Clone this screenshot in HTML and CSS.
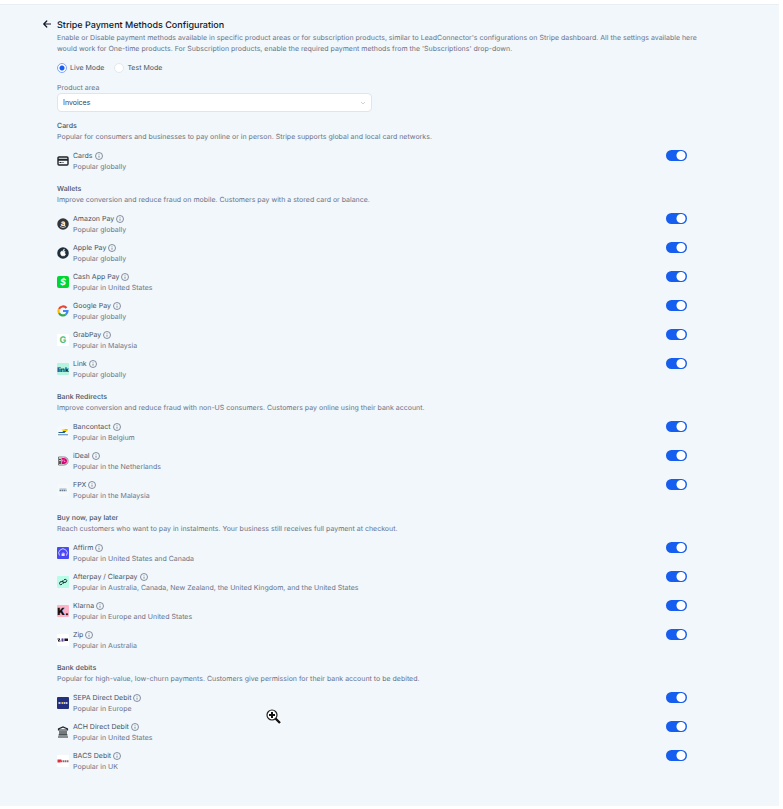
FILE: index.html
```html
<!DOCTYPE html>
<html lang="en">
<head>
    <meta charset="UTF-8">
    <meta name="viewport" content="width=device-width, initial-scale=1.0">
    <title>Stripe Payment Methods Configuration</title>
    <link rel="stylesheet" href="styles.css">
</head>
<body>
    <svg class="sprite" aria-hidden="true">
        <symbol id="info" viewBox="0 0 16 16">
            <circle cx="8" cy="8" r="7" fill="none" stroke="currentColor" stroke-width="1.6"/>
            <path d="M8 7.4v4M8 4.400v1.200" fill="none" stroke="currentColor" stroke-width="1.6"/>
        </symbol>
    </svg>

    <main class="panel">
        <button class="back-button" aria-label="Back">
            <svg viewBox="0 0 16 16"><path d="M15 8H1.5M7.5 2L1.5 8l6 6" fill="none" stroke="currentColor" stroke-width="2.4" stroke-linecap="round" stroke-linejoin="round"/></svg>
        </button>
        <div class="content">
            <h1 class="title">Stripe Payment Methods Configuration</h1>
            <p class="intro">Enable or Disable payment methods available in specific product areas or for subscription products, similar to LeadConnector's configurations on Stripe dashboard. All the settings available here would work for One-time products. For Subscription products, enable the required payment methods from the 'Subscriptions' drop-down.</p>

            <div class="modes">
                <label class="mode"><input type="radio" name="mode" class="radio" checked>Live Mode</label>
                <label class="mode"><input type="radio" name="mode" class="radio">Test Mode</label>
            </div>

            <label class="field-label" for="area">Product area</label>
            <div class="select-box">
                <select id="area" class="select">
                    <option>Invoices</option>
                </select>
                <svg class="chevron" viewBox="0 0 12 12"><path d="M2 4l4 4 4-4" fill="none" stroke="currentColor" stroke-width="1.4"/></svg>
            </div>

            <section class="group">
                <h2 class="group-title">Cards</h2>
                <p class="group-text">Popular for consumers and businesses to pay online or in person. Stripe supports global and local card networks.</p>
                <ul class="methods">
                    <li class="method">
                        <svg class="logo" viewBox="0 0 24 24"><rect x="2" y="4" width="20" height="16" rx="2" fill="none" stroke="#202327" stroke-width="2.8"/><path d="M2 9.5h20" stroke="#202327" stroke-width="4"/><path d="M5 15h4M11 15h2" stroke="#202327" stroke-width="2"/></svg>
                        <div class="details">
                            <label class="name" for="cards">Cards</label><svg class="info"><use href="#info"/></svg>
                            <p class="region">Popular globally</p>
                        </div>
                        <input type="checkbox" id="cards" class="toggle" checked>
                    </li>
                </ul>
            </section>

            <section class="group">
                <h2 class="group-title">Wallets</h2>
                <p class="group-text">Improve conversion and reduce fraud on mobile. Customers pay with a stored card or balance.</p>
                <ul class="methods">
                    <li class="method">
                        <svg class="logo" viewBox="0 0 24 24"><circle cx="12" cy="12" r="11.5" fill="#333536"/><text x="12" y="15" font-size="16" font-weight="700" text-anchor="middle" fill="#fff">a</text><path d="M6 17q6 4 12 0" fill="none" stroke="#fff" stroke-width="1.4"/></svg>
                        <div class="details">
                            <label class="name" for="amazon">Amazon Pay</label><svg class="info"><use href="#info"/></svg>
                            <p class="region">Popular globally</p>
                        </div>
                        <input type="checkbox" id="amazon" class="toggle" checked>
                    </li>
                    <li class="method">
                        <svg class="logo" viewBox="0 0 24 24"><circle cx="12" cy="12" r="11.5" fill="#1f2f3c"/><path d="M16.5 9.3c-1.7-1.6-3.3-.5-4.3-.5s-2.500-1-4.100.4c-1.800 1.600-1.300 5.200.7 7.700 1.300 1.500 2 .6 3.400.6s2.200.9 3.400-.6c.7-.8 1.200-1.700 1.500-2.600-2-1-2.200-3.600-.6-5zM12 8c0-2 1-3.200 2.800-3.600.1 2-1 3.400-2.800 3.600z" fill="#fff" stroke="#fff"/></svg>
                        <div class="details">
                            <label class="name" for="apple">Apple Pay</label><svg class="info"><use href="#info"/></svg>
                            <p class="region">Popular globally</p>
                        </div>
                        <input type="checkbox" id="apple" class="toggle" checked>
                    </li>
                    <li class="method">
                        <svg class="logo" viewBox="0 0 24 24"><rect width="24" height="24" rx="4" fill="#00d632"/><text x="12" y="18.500" font-size="18" font-weight="700" font-style="italic" text-anchor="middle" fill="#fff">$</text></svg>
                        <div class="details">
                            <label class="name" for="cashapp">Cash App Pay</label><svg class="info"><use href="#info"/></svg>
                            <p class="region">Popular in United States</p>
                        </div>
                        <input type="checkbox" id="cashapp" class="toggle" checked>
                    </li>
                    <li class="method">
                        <svg class="logo" viewBox="0 0 24 24" fill="none" stroke-width="4.400"><path d="M19 6.100A9 9 0 0 0 4 8" stroke="#ea4335"/><path d="M4 8a9 9 0 0 0 0 8" stroke="#fbbc05"/><path d="M4 16a9 9 0 0 0 13.500 3" stroke="#34a853"/><path d="M17.500 19a9 9 0 0 0 3.500-7H12" stroke="#4285f4"/></svg>
                        <div class="details">
                            <label class="name" for="google">Google Pay</label><svg class="info"><use href="#info"/></svg>
                            <p class="region">Popular globally</p>
                        </div>
                        <input type="checkbox" id="google" class="toggle" checked>
                    </li>
                    <li class="method">
                        <svg class="logo" viewBox="0 0 24 24"><rect width="24" height="24" rx="2" fill="#fff"/><text x="12" y="18" font-size="18" font-weight="700" text-anchor="middle" fill="#4fbd78">G</text></svg>
                        <div class="details">
                            <label class="name" for="grabpay">GrabPay</label><svg class="info"><use href="#info"/></svg>
                            <p class="region">Popular in Malaysia</p>
                        </div>
                        <input type="checkbox" id="grabpay" class="toggle" checked>
                    </li>
                    <li class="method">
                        <svg class="logo" viewBox="0 0 24 24"><rect width="24" height="24" rx="2" fill="#b5f5df"/><text x="12" y="18" font-size="13" font-weight="800" text-anchor="middle" fill="#10372f">link</text></svg>
                        <div class="details">
                            <label class="name" for="link">Link</label><svg class="info"><use href="#info"/></svg>
                            <p class="region">Popular globally</p>
                        </div>
                        <input type="checkbox" id="link" class="toggle" checked>
                    </li>
                </ul>
            </section>

            <section class="group">
                <h2 class="group-title">Bank Redirects</h2>
                <p class="group-text">Improve conversion and reduce fraud with non-US consumers. Customers pay online using their bank account.</p>
                <ul class="methods">
                    <li class="method">
                        <svg class="logo" viewBox="0 0 24 24"><rect width="24" height="24" rx="2" fill="#f6f9fa"/><path d="M3 13h6l6-6h7l-3 4h-5l-3 3H3z" fill="#ffd000"/><path d="M3 12h8l5-5h5l-6 7H3z" fill="#155da8"/><path d="M9 7h13l-2 3h-8z" fill="#ffd000"/><path d="M2 17.500h20" stroke="#5a83ac" stroke-width="2"/></svg>
                        <div class="details">
                            <label class="name" for="bancontact">Bancontact</label><svg class="info"><use href="#info"/></svg>
                            <p class="region">Popular in Belgium</p>
                        </div>
                        <input type="checkbox" id="bancontact" class="toggle" checked>
                    </li>
                    <li class="method">
                        <svg class="logo" viewBox="0 0 24 24"><path d="M3 4h10c6 0 9 3 9 8s-3 8-9 8H3z" fill="#fff" stroke="#555" stroke-width="1.500"/><path d="M9 6h4c5 0 7 2 7 6s-2 6-7 6H9z" fill="#d50172"/><circle cx="6" cy="9" r="1.800" fill="#222"/><path d="M4.500 12h3v6h-3z" fill="#222"/><path d="M11 9v4M14 9v4h3" stroke="#fff" fill="none"/></svg>
                        <div class="details">
                            <label class="name" for="ideal">iDeal</label><svg class="info"><use href="#info"/></svg>
                            <p class="region">Popular in the Netherlands</p>
                        </div>
                        <input type="checkbox" id="ideal" class="toggle" checked>
                    </li>
                    <li class="method">
                        <svg class="logo" viewBox="0 0 24 24"><rect width="24" height="24" rx="2" fill="#f6f9fa"/><path d="M5 10h14" stroke="#9ab2ce" stroke-width="2"/><path d="M5 13h14" stroke="#68788b" stroke-width="3" stroke-dasharray="3 1"/></svg>
                        <div class="details">
                            <label class="name" for="fpx">FPX</label><svg class="info"><use href="#info"/></svg>
                            <p class="region">Popular in the Malaysia</p>
                        </div>
                        <input type="checkbox" id="fpx" class="toggle" checked>
                    </li>
                </ul>
            </section>

            <section class="group">
                <h2 class="group-title">Buy now, pay later</h2>
                <p class="group-text">Reach customers who want to pay in instalments. Your business still receives full payment at checkout.</p>
                <ul class="methods">
                    <li class="method">
                        <svg class="logo" viewBox="0 0 24 24"><rect width="24" height="24" rx="2" fill="#4a4af4"/><path d="M5 17a8.500 8.500 0 1 1 14 0" fill="none" stroke="#d8d8ff" stroke-width="1.800"/><text x="12" y="18" font-size="12" font-weight="700" text-anchor="middle" fill="#fff">a</text></svg>
                        <div class="details">
                            <label class="name" for="affirm">Affirm</label><svg class="info"><use href="#info"/></svg>
                            <p class="region">Popular in United States and Canada</p>
                        </div>
                        <input type="checkbox" id="affirm" class="toggle" checked>
                    </li>
                    <li class="method">
                        <svg class="logo" viewBox="0 0 24 24"><rect width="24" height="24" rx="2" fill="#b8fbe7"/><path d="M10 16.500l-3.500 1L5 15l1.500-3.500 5.500-.5 1 3-2 2M14 7.500l3.500-1L19.500 9 18 12.500l-5.500.5-1.500-3 2-2" fill="none" stroke="#14332d" stroke-width="2"/></svg>
                        <div class="details">
                            <label class="name" for="afterpay">Afterpay / Clearpay</label><svg class="info"><use href="#info"/></svg>
                            <p class="region">Popular in Australia, Canada, New Zealand, the United Kingdom, and the United States</p>
                        </div>
                        <input type="checkbox" id="afterpay" class="toggle" checked>
                    </li>
                    <li class="method">
                        <svg class="logo" viewBox="0 0 24 24"><rect width="24" height="24" rx="2" fill="#ffb3c7"/><text x="12" y="19" font-size="20" font-weight="900" text-anchor="middle" fill="#111">K.</text></svg>
                        <div class="details">
                            <label class="name" for="klarna">Klarna</label><svg class="info"><use href="#info"/></svg>
                            <p class="region">Popular in Europe and United States</p>
                        </div>
                        <input type="checkbox" id="klarna" class="toggle" checked>
                    </li>
                    <li class="method">
                        <svg class="logo" viewBox="0 0 24 24"><rect width="24" height="24" rx="2" fill="#fff"/><path d="M1 10h5l-4 4h5" fill="none" stroke="#1c1526" stroke-width="2"/><rect x="8" y="9" width="7" height="6" fill="#aa8fff"/><path d="M11 9v6" stroke="#402a70" stroke-width="1.500"/><path d="M15 9h7v5h-7z" fill="#1c1526"/></svg>
                        <div class="details">
                            <label class="name" for="zip">Zip</label><svg class="info"><use href="#info"/></svg>
                            <p class="region">Popular in Australia</p>
                        </div>
                        <input type="checkbox" id="zip" class="toggle" checked>
                    </li>
                </ul>
            </section>

            <section class="group">
                <h2 class="group-title">Bank debits</h2>
                <p class="group-text">Popular for high-value, low-churn payments. Customers give permission for their bank account to be debited.</p>
                <ul class="methods">
                    <li class="method">
                        <svg class="logo" viewBox="0 0 24 24"><rect width="24" height="24" rx="2" fill="#24307d"/><path d="M3 12h5M14 12h7" stroke="#c3cae6" stroke-width="4" stroke-dasharray="3 1"/><path d="M9 12h4" stroke="#d8bd52" stroke-width="4"/></svg>
                        <div class="details">
                            <label class="name" for="sepa">SEPA Direct Debit</label><svg class="info"><use href="#info"/></svg>
                            <p class="region">Popular in Europe</p>
                        </div>
                        <input type="checkbox" id="sepa" class="toggle" checked>
                    </li>
                    <li class="method">
                        <svg class="logo" viewBox="0 0 24 24" fill="none" stroke="#24272b" stroke-width="2.400"><path d="M3 8V6l9-4 9 4v2zM6 10v8M10 10v8M14 10v8M18 10v8M3 18h18M2 22h20"/></svg>
                        <div class="details">
                            <label class="name" for="ach">ACH Direct Debit</label><svg class="info"><use href="#info"/></svg>
                            <p class="region">Popular in United States</p>
                        </div>
                        <input type="checkbox" id="ach" class="toggle" checked>
                    </li>
                    <li class="method">
                        <svg class="logo" viewBox="0 0 24 24"><rect width="24" height="24" rx="2" fill="#fff"/><path d="M1 9h8l-2 6H1z" fill="#df3043"/><path d="M8 12.500h15" stroke="#8a6a70" stroke-width="4" stroke-dasharray="3 1"/></svg>
                        <div class="details">
                            <label class="name" for="bacs">BACS Debit</label><svg class="info"><use href="#info"/></svg>
                            <p class="region">Popular in UK</p>
                        </div>
                        <input type="checkbox" id="bacs" class="toggle" checked>
                    </li>
                </ul>
            </section>
        </div>

        <!-- zoom cursor -->
        <svg class="zoom-cursor" viewBox="0 0 16 16" aria-hidden="true"><path d="M9.500 9.500l5 5" stroke="#fff" stroke-width="4"/><path d="M9.500 9.500l4.500 4.500" stroke="#111" stroke-width="2.400"/><circle cx="6" cy="6" r="5" fill="#fff" stroke="#222" stroke-width="1.200"/><path d="M6 3v6M3 6h6" stroke="#111" stroke-width="2"/></svg>
    </main>
</body>
</html>
```
FILE: styles.css
```css
* {
    box-sizing: border-box;
}
body {
    margin: 0;
    padding: 4px 4px 3px 0;
    background-color: #fff;
    color: #6b7389;
    font-family: Inter, "Liberation Sans", sans-serif;
    font-size: 7px;
    line-height: 11px;
    text-rendering: geometricPrecision;
}
h1, h2, p, ul {
    margin: 0;
    padding: 0;
}
svg {
    display: block;
}
.sprite {
    display: none;
}
.panel {
    position: relative;
    display: flex;
    gap: 6px;
    padding: 15px 92px 23px 43px;
    background-color: #f1f7fa;
    border-top: 1px solid #e8eef1;
}
.back-button {
    width: 8px;
    height: 8px;
    padding: 0;
    border: none;
    background: none;
    color: #101828;
    cursor: pointer;
}
.content {
    flex: 1;
}
.title {
    color: #101828;
    font-size: 9px;
    font-weight: 500;
    line-height: 12px;
}
.intro {
    margin-right: -12px;
    margin-bottom: 8px;
}
.modes {
    display: flex;
    gap: 10px;
    margin-bottom: 9px;
}
.mode {
    display: flex;
    align-items: center;
    gap: 3px;
    color: #475467;
}
.radio {
    appearance: none;
    width: 10px;
    height: 10px;
    margin: 0;
    border: 1px solid #e4e9ee;
    border-radius: 50%;
    background-color: #fff;
}
.radio:checked {
    border-color: #7fa6fb;
    background-image: radial-gradient(circle, #155eef 2px, #fff 3px);
}
.field-label {
    display: block;
}
.select-box {
    position: relative;
    width: 50%;
    margin-bottom: 8px;
}
.select {
    appearance: none;
    display: block;
    width: 100%;
    height: 19px;
    padding: 0 5px;
    border: 1px solid #dfe5ea;
    border-radius: 4px;
    background-color: #fff;
    color: #344054;
    font: inherit;
}
.chevron {
    position: absolute;
    top: 7px;
    right: 6px;
    width: 6px;
    height: 6px;
    color: #b8bec8;
    pointer-events: none;
}
.group {
    margin-bottom: 11px;
}
.group-title {
    color: #475467;
    font-size: 7px;
    font-weight: 500;
}
.group-text {
    margin-bottom: 8px;
}
.methods {
    display: flex;
    flex-direction: column;
    gap: 7px;
    list-style: none;
}
.method {
    display: flex;
    align-items: center;
    gap: 4px;
}
.logo {
    width: 12px;
    height: 12px;
}
.details {
    display: grid;
    grid-template-columns: auto 1fr;
    align-items: center;
    column-gap: 2px;
    flex: 1;
}
.name {
    color: #475467;
}
.info {
    width: 8px;
    height: 8px;
}
.region {
    grid-column: 1 / 3;
}
.toggle {
    appearance: none;
    align-self: flex-start;
    width: 21px;
    height: 11px;
    margin: 0;
    border-radius: 6px;
    background-color: #b8bec8;
    background-image: radial-gradient(circle at 6px 50%, #fff 4px, transparent 5px);
    cursor: pointer;
}
.toggle:checked {
    background-color: #155eef;
    background-image: radial-gradient(circle at 15px 50%, #fff 4px, transparent 5px);
}
.zoom-cursor {
    position: absolute;
    top: 704px;
    left: 266px;
    width: 16px;
    height: 16px;
}
```
